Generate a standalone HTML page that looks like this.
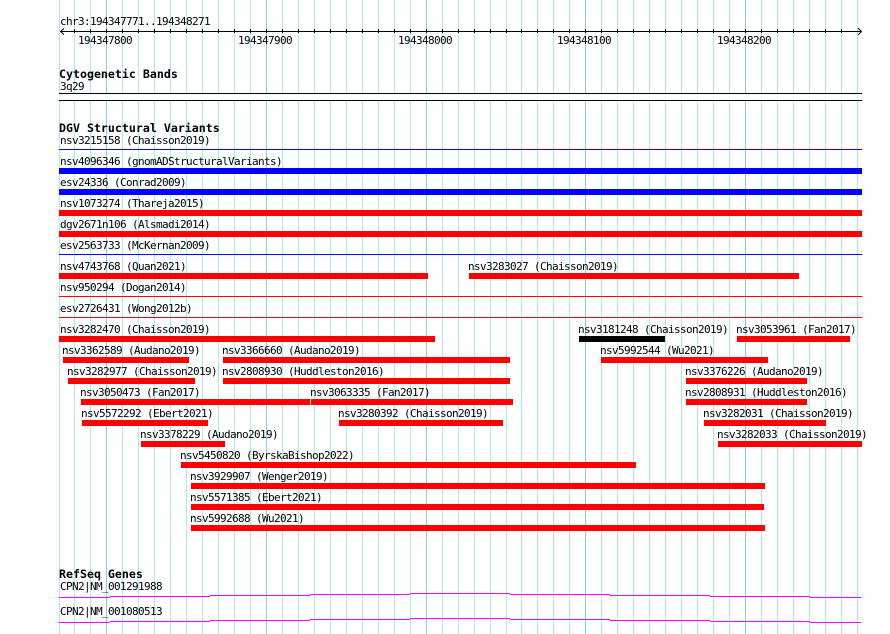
<!DOCTYPE html>
<html><head><meta charset="utf-8"><style>
html,body{margin:0;padding:0;background:#fff}
svg{display:block}
text{font-family:"DejaVu Sans Mono","Liberation Mono",monospace;font-size:11px;letter-spacing:-0.622px;fill:#000;white-space:pre}
.t{font-size:11.62px;letter-spacing:0;font-weight:bold}
.b{shape-rendering:crispEdges}
</style></head><body>
<svg width="890" height="634" viewBox="0 0 890 634" xmlns="http://www.w3.org/2000/svg">
<g class="b" fill="none" stroke-width="1">
<path stroke="#a4eef2" d="M59.5 0V634M74.5 0V634M90.5 0V634M122.5 0V634M138.5 0V634M154.5 0V634M170.5 0V634M186.5 0V634M202.5 0V634M218.5 0V634M234.5 0V634M250.5 0V634M282.5 0V634M298.5 0V634M314.5 0V634M330.5 0V634M346.5 0V634M362.5 0V634M378.5 0V634M394.5 0V634M410.5 0V634M442.5 0V634M458.5 0V634M474.5 0V634M490.5 0V634M506.5 0V634"/>
<path stroke="#ace8e4" d="M521.5 0V634M537.5 0V634M553.5 0V634M569.5 0V634M601.5 0V634M617.5 0V634M633.5 0V634M649.5 0V634M665.5 0V634M681.5 0V634M697.5 0V634M713.5 0V634M729.5 0V634M761.5 0V634M777.5 0V634M793.5 0V634M809.5 0V634M825.5 0V634M841.5 0V634M857.5 0V634"/>
<path stroke="#84ccf0" d="M106.5 0V634M266.5 0V634M426.5 0V634M585.5 0V634M745.5 0V634"/>
<rect x="59" y="94" width="803" height="6" fill="#fff"/>
<path stroke="#000" d="M60 31.5H861M59 93.5H862M59 100.5H862"/>
<path stroke="#000" d="M74.5 29V33M90.5 29V33M106.5 29V33M122.5 29V33M138.5 29V33M154.5 29V33M170.5 29V33M186.5 29V33M202.5 29V33M218.5 29V33M234.5 29V33M250.5 29V33M266.5 29V33M282.5 29V33M298.5 29V33M314.5 29V33M330.5 29V33M346.5 29V33M362.5 29V33M378.5 29V33M394.5 29V33M410.5 29V33M426.5 29V33M442.5 29V33M458.5 29V33M474.5 29V33M490.5 29V33M506.5 29V33M521.5 29V33M537.5 29V33M553.5 29V33M569.5 29V33M585.5 29V33M601.5 29V33M617.5 29V33M633.5 29V33M649.5 29V33M665.5 29V33M681.5 29V33M697.5 29V33M713.5 29V33M729.5 29V33M745.5 29V33M761.5 29V33M777.5 29V33M793.5 29V33M809.5 29V33M825.5 29V33M841.5 29V33"/>
<path stroke="#00f" d="M59 149.5H862M59 254.5H862"/>
<path stroke="#f00" d="M59 296.5H862M59 317.5H862"/>
<path stroke="#f0f" d="M59 597.5H110M110 596.5H210M210 595.5H310M310 594.5H410M410 593.5H510M510 594.5H610M610 595.5H710M710 596.5H810M810 597.5H861"/>
<path stroke="#f0f" d="M59 622.5H110M110 621.5H210M210 620.5H310M310 619.5H410M410 618.5H510M510 619.5H610M610 620.5H710M710 621.5H810M810 622.5H861"/>
</g>
<path d="M64 28.5L60.5 31.5L64 34.5M858 28L861.5 31.5L858 35" fill="none" stroke="#000" stroke-width="1"/>
<g class="b" fill="#00f">
<rect x="59" y="168" width="803" height="6"/>
<rect x="59" y="189" width="803" height="6"/>
</g>
<g class="b" fill="#f00">
<rect x="59" y="210" width="803" height="6"/>
<rect x="59" y="231" width="803" height="6"/>
<rect x="59" y="273" width="369" height="6"/>
<rect x="469" y="273" width="330" height="6"/>
<rect x="59" y="336" width="376" height="6"/>
<rect x="737" y="336" width="113" height="6"/>
<rect x="63" y="357" width="126" height="6"/>
<rect x="223" y="357" width="287" height="6"/>
<rect x="601" y="357" width="167" height="6"/>
<rect x="68" y="378" width="127" height="6"/>
<rect x="223" y="378" width="287" height="6"/>
<rect x="686" y="378" width="121" height="6"/>
<rect x="81" y="399" width="229" height="6"/>
<rect x="311" y="399" width="202" height="6"/>
<rect x="686" y="399" width="121" height="6"/>
<rect x="82" y="420" width="126" height="6"/>
<rect x="339" y="420" width="164" height="6"/>
<rect x="704" y="420" width="122" height="6"/>
<rect x="141" y="441" width="84" height="6"/>
<rect x="718" y="441" width="144" height="6"/>
<rect x="181" y="462" width="455" height="6"/>
<rect x="191" y="483" width="574" height="6"/>
<rect x="191" y="504" width="573" height="6"/>
<rect x="191" y="525" width="574" height="6"/>
</g>
<rect class="b" x="579" y="336" width="86" height="6" fill="#000"/>
<text x="60" y="25">chr3:194347771..194348271</text>
<text x="78" y="44">194347800</text>
<text x="238" y="44">194347900</text>
<text x="398" y="44">194348000</text>
<text x="557" y="44">194348100</text>
<text x="717" y="44">194348200</text>
<text class="t" x="59" y="78">Cytogenetic Bands</text>
<text x="60" y="90">3q29</text>
<text class="t" x="59" y="132">DGV Structural Variants</text>
<text x="60" y="144">nsv3215158 (Chaisson2019)</text>
<text x="60" y="165">nsv4096346 (gnomADStructuralVariants)</text>
<text x="60" y="186">esv24336 (Conrad2009)</text>
<text x="60" y="207">nsv1073274 (Thareja2015)</text>
<text x="60" y="228">dgv2671n106 (Alsmadi2014)</text>
<text x="60" y="249">esv2563733 (McKernan2009)</text>
<text x="60" y="270">nsv4743768 (Quan2021)</text>
<text x="468" y="270">nsv3283027 (Chaisson2019)</text>
<text x="60" y="291">nsv950294 (Dogan2014)</text>
<text x="60" y="312">esv2726431 (Wong2012b)</text>
<text x="60" y="333">nsv3282470 (Chaisson2019)</text>
<text x="578" y="333">nsv3181248 (Chaisson2019)</text>
<text x="736" y="333">nsv3053961 (Fan2017)</text>
<text x="62" y="354">nsv3362589 (Audano2019)</text>
<text x="222" y="354">nsv3366660 (Audano2019)</text>
<text x="600" y="354">nsv5992544 (Wu2021)</text>
<text x="67" y="375">nsv3282977 (Chaisson2019)</text>
<text x="222" y="375">nsv2808930 (Huddleston2016)</text>
<text x="685" y="375">nsv3376226 (Audano2019)</text>
<text x="80" y="396">nsv3050473 (Fan2017)</text>
<text x="310" y="396">nsv3063335 (Fan2017)</text>
<text x="685" y="396">nsv2808931 (Huddleston2016)</text>
<text x="81" y="417">nsv5572292 (Ebert2021)</text>
<text x="338" y="417">nsv3280392 (Chaisson2019)</text>
<text x="703" y="417">nsv3282031 (Chaisson2019)</text>
<text x="140" y="438">nsv3378229 (Audano2019)</text>
<text x="717" y="438">nsv3282033 (Chaisson2019)</text>
<text x="180" y="459">nsv5450820 (ByrskaBishop2022)</text>
<text x="190" y="480">nsv3929907 (Wenger2019)</text>
<text x="190" y="501">nsv5571385 (Ebert2021)</text>
<text x="190" y="522">nsv5992688 (Wu2021)</text>
<text class="t" x="59" y="578">RefSeq Genes</text>
<text x="60" y="590">CPN2|NM_001291988</text>
<text x="60" y="615">CPN2|NM_001080513</text>
</svg>
</body></html>
